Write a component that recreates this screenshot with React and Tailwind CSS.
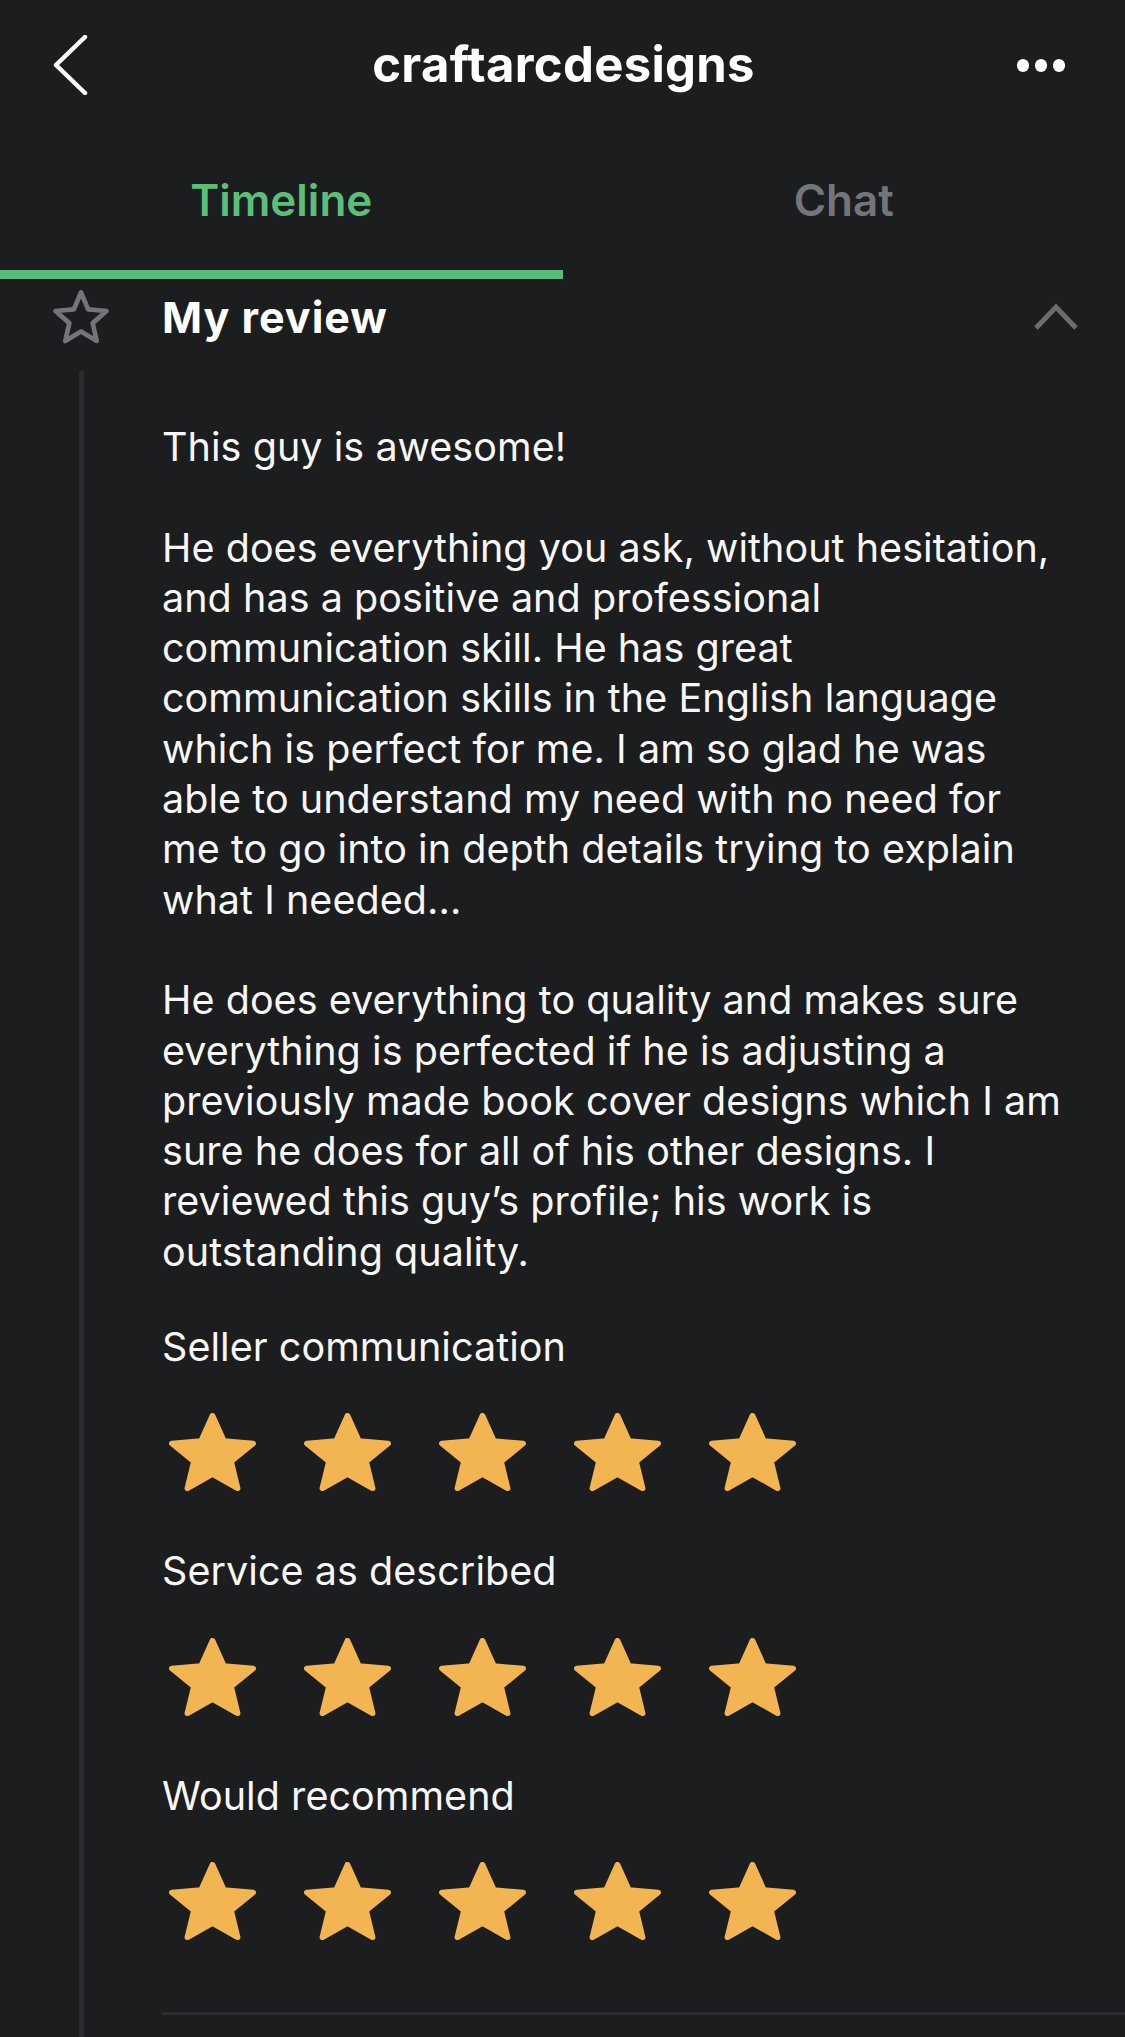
import React from 'react';

const STAR_PATH = 'M50 6 L62.3 35 L93.7 37.8 L70 58.5 L77 89.2 L50 73 L23 89.2 L30 58.5 L6.3 37.8 L37.7 35 Z';

const FilledStar = () => (
  <svg width="87" height="78" viewBox="3.3 3 93.4 89.2" preserveAspectRatio="none">
    <path d={STAR_PATH} fill="#f2b552" stroke="#f2b552" strokeWidth="6" strokeLinejoin="round" />
  </svg>
);

const paragraphs = [
  ['This guy is awesome!'],
  [
    'He does everything you ask, without hesitation,',
    'and has a positive and professional',
    'communication skill. He has great',
    'communication skills in the English language',
    'which is perfect for me. I am so glad he was',
    'able to understand my need with no need for',
    'me to go into in depth details trying to explain',
    'what I needed...',
  ],
  [
    'He does everything to quality and makes sure',
    'everything is perfected if he is adjusting a',
    'previously made book cover designs which I am',
    'sure he does for all of his other designs. I',
    'reviewed this guy\u2019s profile; his work is',
    'outstanding quality.',
  ],
];

const ratings = ['Seller communication', 'Service as described', 'Would recommend'];

export default function App() {
  return (
    <div className="w-[1125px] h-[2037px] overflow-hidden bg-[#1c1d1f] text-white font-['Inter',sans-serif] flex flex-col">
      {/* top bar */}
      <div className="h-[130px] shrink-0 flex items-center justify-between px-[50px]">
        <svg width="36" height="60" viewBox="0 0 36 60" className="ml-[2px]">
          <path d="M33 2 L4 30 L33 58" fill="none" stroke="#ffffff" strokeWidth="4.5" strokeLinecap="round" strokeLinejoin="round" />
        </svg>
        <h1 className="text-[49px] font-bold tracking-[0.3px] ml-[22px]">craftarcdesigns</h1>
        <div className="flex gap-[6px] mr-[10px]">
          <span className="w-[12px] h-[13px] rounded-full bg-white"></span>
          <span className="w-[12px] h-[13px] rounded-full bg-white"></span>
          <span className="w-[12px] h-[13px] rounded-full bg-white"></span>
        </div>
      </div>

      {/* tabs */}
      <div className="h-[149px] shrink-0 grid grid-cols-2">
        <div className="flex flex-col">
          <div className="flex-1 flex items-center justify-center text-[44px] font-semibold text-[#5bbf7a]">Timeline</div>
          <div className="h-[9px] bg-[#56bc7c]"></div>
        </div>
        <div className="flex flex-col">
          <div className="flex-1 flex items-center justify-center text-[44px] font-semibold text-[#74757a]">Chat</div>
          <div className="h-[9px]"></div>
        </div>
      </div>

      {/* review header */}
      <div className="h-[76px] shrink-0 flex items-center pr-[46px]">
        <div className="w-[162px] flex justify-center">
          <svg width="60" height="56" viewBox="0 0 100 96">
            <path d={STAR_PATH} fill="none" stroke="#74757a" strokeWidth="8" strokeLinejoin="round" />
          </svg>
        </div>
        <h2 className="flex-1 text-[43px] font-bold tracking-[1px]">My review</h2>
        <svg width="46" height="28" viewBox="0 0 46 28">
          <path d="M3 25 L23 4 L43 25" fill="none" stroke="#6b6c70" strokeWidth="5" />
        </svg>
      </div>

      {/* review body */}
      <div className="flex-1 flex">
        <div className="w-[162px] shrink-0 flex justify-center pt-[16px]">
          <div className="w-[5px] h-full bg-[#2a2b2e]"></div>
        </div>
        <div className="flex-1 pt-[67px] text-[39.5px] tracking-[0.05px] leading-[50.3px] whitespace-nowrap text-[#f7f7f7]">
          {paragraphs.map((lines, i) => (
            <p key={i} className={i > 0 ? 'mt-[50.3px]' : ''}>
              {lines.map((line) => (
                <span key={line} className="block">{line}</span>
              ))}
            </p>
          ))}

          <div className="mt-[45px]">
            {ratings.map((label, i) => (
              <div key={label} className={i > 0 ? 'mt-[55px]' : ''}>
                <div>{label}</div>
                <div className="flex gap-[48px] mt-[41px] pl-[7px]">
                  {[0, 1, 2, 3, 4].map((n) => (
                    <FilledStar key={n} />
                  ))}
                </div>
              </div>
            ))}
          </div>

          <div className="mt-[72px] h-[3px] bg-[#2a2b2e]"></div>
        </div>
      </div>
    </div>
  );
}
